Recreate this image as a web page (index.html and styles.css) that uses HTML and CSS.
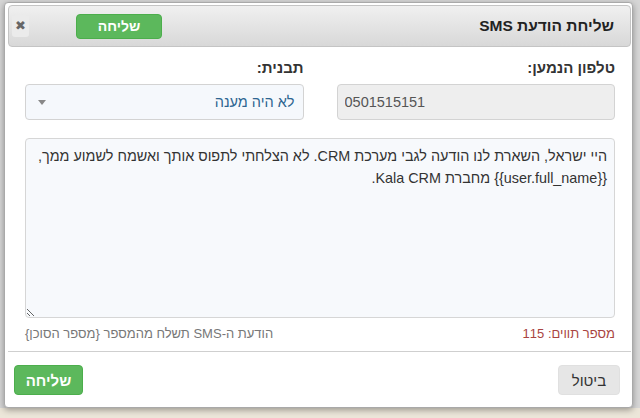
FILE: index.html
```html
<!DOCTYPE html>
<html lang="he" dir="rtl">
<head>
  <meta charset="UTF-8">
  <title>שליחת הודעת SMS</title>
  <link rel="stylesheet" href="styles.css">
</head>
<body>

<div class="modal">
  <div class="modal-header">
    <h4 class="modal-title">שליחת הודעת SMS</h4>
    <button class="btn btn-success btn-top">שליחה</button>
    <button class="close" title="סגירה">&#10006;</button>
  </div>

  <div class="modal-body">
    <div class="row">
      <div class="group">
        <label for="phone">טלפון הנמען:</label>
        <input type="text" id="phone" class="field field-readonly" value="0501515151" readonly>
      </div>
      <div class="group">
        <label for="template">תבנית:</label>
        <div class="select" id="template">
          <span class="select-value">לא היה מענה</span>
          <span class="caret"></span>
        </div>
      </div>
    </div>

    <textarea class="message" id="message">היי ישראל, השארת לנו הודעה לגבי מערכת CRM. לא הצלחתי לתפוס אותך ואשמח לשמוע ממך,
{{user.full_name}} מחברת Kala CRM.</textarea>

    <div class="info">
      <span class="count">מספר תווים: 115</span>
      <span class="hint">הודעת ה-SMS תשלח מהמספר {מספר הסוכן}</span>
    </div>
  </div>

  <div class="modal-footer">
    <button class="btn btn-default">ביטול</button>
    <button class="btn btn-success">שליחה</button>
  </div>
</div>

</body>
</html>
```

FILE: styles.css
```css
body { margin: 0; height: 418px; overflow: hidden; background: linear-gradient(#d6d6d6 0, #d6d6d6 408px, #ece6d9 408px); font-family: "Liberation Sans", Arial, sans-serif; font-size: 14px; color: #333; }

.modal { box-sizing: border-box; width: 629px; height: 406px; margin: 2px 7px 0 auto; padding: 2px 1px 0 3px; background: #fff; border: 1px solid #a9a9a9; border-radius: 4px; box-shadow: 0 2px 6px rgba(0,0,0,.35); display: flex; flex-direction: column; }

.modal-header { box-sizing: border-box; height: 42px; display: flex; align-items: center; padding: 0 16px 0 3px; border: 1px solid #c4c4c4; border-radius: 4px; background: linear-gradient(#f0f0f0, #d8d8d8); }
.modal-title { margin: 0 0 0 auto; font-size: 15.5px; font-weight: bold; color: #222; }
.btn-top { width: 86px; height: 25px; margin-left: 47px; font-size: 15px; }
.close { width: 17px; height: 22px; padding: 0; border: 0; border-radius: 3px; background: #ebebeb; color: #666; font-size: 13px; line-height: 22px; font-family: "DejaVu Sans", sans-serif; }

.btn { font-family: inherit; font-size: 14px; border-radius: 4px; padding: 0; cursor: pointer; }
.btn-success { background: #5cb85c; border: 1px solid #4cae4c; color: #fff; font-weight: bold; }
.btn-default { background: #e6e6e6; border: 1px solid #e0e0e0; color: #333; }

.modal-body { padding: 0 16px 0 17px; }
.row { display: grid; grid-template-columns: 1fr 1fr; gap: 33px; margin-top: 13px; }
.group label { display: block; font-weight: bold; font-size: 15px; line-height: 16px; margin-bottom: 8px; }

.field { box-sizing: border-box; width: 100%; height: 36px; border: 1px solid #d3d3d3; border-radius: 4px; font-family: inherit; font-size: 14.5px; }
.field-readonly { background: #eee; color: #555; direction: ltr; text-align: left; padding: 0 7px; }

.select { box-sizing: border-box; height: 36px; display: flex; align-items: center; justify-content: space-between; padding: 0 8px 0 12px; border: 1px solid #d3d3d3; border-radius: 4px; background: #f5f8fc; font-size: 14.5px; }
.select-value { color: #2d6591; }
.caret { width: 0; height: 0; border-left: 4px solid transparent; border-right: 4px solid transparent; border-top: 5px solid #888; }

.message { display: block; box-sizing: border-box; width: 100%; height: 180px; margin-top: 18px; padding: 6px 7px; border: 1px solid #d6d6d6; border-radius: 4px; background: #f7f9fc; font-family: inherit; font-size: 14.4px; line-height: 22px; color: #333; }

.info { display: flex; justify-content: space-between; margin-top: 8px; font-size: 13px; line-height: 16px; }
.count { color: #a94442; }
.hint { color: #777; }

.modal-footer { display: flex; justify-content: space-between; align-items: center; margin-top: 9px; padding: 13px 11px 0 6px; border-top: 1px solid #cfcfcf; }
.modal-footer .btn { height: 30px; font-size: 15px; }
.modal-footer .btn-default { width: 62px; }
.modal-footer .btn-success { width: 69px; }
```
